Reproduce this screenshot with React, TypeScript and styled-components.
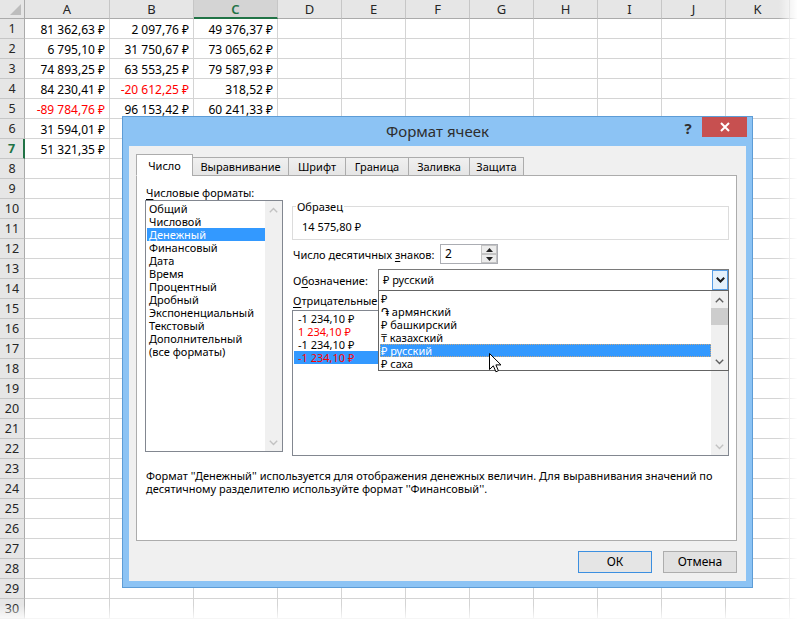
import React from 'react'
import styled, { createGlobalStyle, css } from 'styled-components'

const uiFont = `'Noto Sans', 'DejaVu Sans', sans-serif`

const GlobalStyle = createGlobalStyle`
  html, body { margin: 0; padding: 0; background: #ffffff; }
  body { font-family: ${uiFont}; overflow: hidden; }
`

const Page = styled.div`
  position: relative;
  width: 801px;
  height: 625px;
  overflow: hidden;
  background: #fff;
`

/* ---------- spreadsheet ---------- */

const Sheet = styled.div`
  display: grid;
  grid-template-columns: 25px 85px 84px 84px repeat(8, 64px) 1fr;
  grid-template-rows: 19px;
  grid-auto-rows: 20px;
  font-family: ${uiFont};
`

const HeadBase = css`
  box-sizing: border-box;
  background: #e6e6e6;
  color: #262626;
  font-size: 13px;
  display: flex;
  align-items: center;
  justify-content: center;
`

const Corner = styled.div`
  ${HeadBase}
  position: relative;
  border-right: 1px solid #ababab;
  border-bottom: 1px solid #ababab;

  &::after {
    content: '';
    position: absolute;
    right: 3px;
    bottom: 3px;
    border-style: solid;
    border-width: 0 0 11px 11px;
    border-color: transparent transparent #bdbdbd transparent;
  }
`

const ColHead = styled.div<{ $active?: boolean }>`
  ${HeadBase}
  border-right: 1px solid #c6c6c6;
  border-bottom: 1px solid #ababab;
  ${({ $active }) =>
    $active &&
    css`
      background: #d4d4d4;
      color: #217346;
      font-weight: 600;
      border-bottom: 2px solid #217346;
    `}
`

const RowHead = styled.div<{ $active?: boolean }>`
  ${HeadBase}
  font-size: 12.5px;
  border-right: 1px solid #ababab;
  border-bottom: 1px solid #c6c6c6;
  ${({ $active }) =>
    $active &&
    css`
      color: #217346;
      font-weight: 700;
      border-right: 2px solid #217346;
    `}
`

const Cell = styled.div<{ $red?: boolean }>`
  box-sizing: border-box;
  border-right: 1px solid #d4d4d4;
  border-bottom: 1px solid #d4d4d4;
  font-size: 12px;
  line-height: 21px;
  padding-right: 4px;
  text-align: right;
  white-space: nowrap;
  color: ${({ $red }) => ($red ? '#ff0000' : '#000')};
`

const FadeRight = styled.div`
  position: absolute;
  top: 0;
  right: 0;
  width: 22px;
  height: 100%;
  background: linear-gradient(to right, rgba(255, 255, 255, 0), #fff 85%);
  pointer-events: none;
`

const FadeBottom = styled.div`
  position: absolute;
  left: 0;
  bottom: 0;
  width: 100%;
  height: 20px;
  background: linear-gradient(to bottom, rgba(255, 255, 255, 0), #fff 85%);
  pointer-events: none;
`

/* ---------- dialog window ---------- */

const Window = styled.div`
  position: absolute;
  left: 122px;
  top: 116px;
  width: 631px;
  height: 472px;
  box-sizing: border-box;
  border: 1px solid #5d9cd6;
  background: #8cc3f4;
  display: flex;
  flex-direction: column;
  font-family: ${uiFont};
  font-size: 11px;
  color: #000;
`

const TitleBar = styled.div`
  height: 29px;
  flex: none;
  display: grid;
  grid-template-columns: 1fr auto 1fr;
  align-items: start;
`

const Title = styled.div`
  grid-column: 2;
  font-size: 15px;
  line-height: 29px;
  color: #2e2e2e;
`

const Controls = styled.div`
  grid-column: 3;
  justify-self: end;
  display: flex;
  margin-right: 5px;
`

const HelpButton = styled.div`
  width: 28px;
  height: 22px;
  line-height: 22px;
  text-align: center;
  font-size: 15px;
  font-weight: 700;
  color: #303030;
`

const CloseButton = styled.div`
  width: 45px;
  height: 20px;
  background: #c75050;
  display: flex;
  align-items: center;
  justify-content: center;
`

const Client = styled.div`
  flex: 1;
  margin: 0 6px 6px;
  background: #f0f0f0;
  padding: 8px 9px 0 7px;
  display: flex;
  flex-direction: column;
`

const Tabs = styled.div`
  display: flex;
  align-items: flex-end;
  height: 22px;
  margin-bottom: -1px;
  position: relative;
  z-index: 1;
`

const Tab = styled.div<{ $active?: boolean; $w: number }>`
  width: ${({ $w }) => $w}px;
  height: ${({ $active }) => ($active ? 22 : 19)}px;
  box-sizing: border-box;
  margin-left: -1px;
  border: 1px solid #acacac;
  border-bottom-color: ${({ $active }) => ($active ? '#fff' : '#acacac')};
  background: ${({ $active }) => ($active ? '#fff' : 'linear-gradient(#f0f0f0, #e5e5e5)')};
  text-align: center;
  line-height: ${({ $active }) => ($active ? 22 : 17)}px;
  white-space: nowrap;

  &:first-child {
    margin-left: 0;
  }
`

const Panel = styled.div`
  height: 366px;
  flex: none;
  box-sizing: border-box;
  border: 1px solid #acacac;
  background: #fff;
  padding: 9px 7px 0 8px;
`

const Formats = styled.div`
  display: grid;
  grid-template-columns: 138px 1fr;
  column-gap: 9px;
  align-items: start;
`

const Column = styled.div`
  display: flex;
  flex-direction: column;
`

const Label = styled.div`
  line-height: 15px;
  height: 15px;
  padding-left: 1px;
  white-space: nowrap;
`

const Key = styled.span`
  text-decoration: underline;
  text-underline-offset: 2px;
`

const ListBox = styled.div<{ $h: number }>`
  height: ${({ $h }) => $h}px;
  box-sizing: border-box;
  border: 1px solid #828790;
  background: #fff;
  display: flex;
`

const ListItems = styled.div`
  flex: 1;
  padding: 1px 0 0 1px;
  overflow: hidden;
`

const ListItem = styled.div<{ $selected?: boolean; $red?: boolean; $pad?: number }>`
  height: 13px;
  line-height: 13px;
  padding-left: ${({ $pad }) => $pad ?? 2}px;
  white-space: nowrap;
  color: ${({ $red, $selected }) => ($red ? '#ff0000' : $selected ? '#fff' : '#000')};
  background: ${({ $selected }) => ($selected ? '#3399ff' : 'transparent')};
`

const ScrollTrack = styled.div`
  width: 17px;
  flex: none;
  background: #f0f0f0;
  display: flex;
  flex-direction: column;
`

const ScrollArrow = styled.div`
  height: 17px;
  flex: none;
  display: flex;
  align-items: center;
  justify-content: center;
`

const ScrollThumb = styled.div`
  height: 17px;
  flex: none;
  background: #cdcdcd;
`

const ScrollRest = styled.div`
  flex: 1;
`

const Group = styled.fieldset`
  margin: 15px 0 0;
  padding: 0 0 6px 9px;
  min-width: 0;
  border: 1px solid #dcdcdc;
`

const Legend = styled.legend`
  margin-left: -6px;
  padding: 0 1px;
  line-height: 13px;
`

const Sample = styled.div`
  margin-top: 7px;
  line-height: 13px;
`

const FieldRow = styled.div<{ $mt: number }>`
  display: flex;
  align-items: center;
  margin-top: ${({ $mt }) => $mt}px;
  line-height: 15px;
`

const FieldLabel = styled.div<{ $w: number }>`
  width: ${({ $w }) => $w}px;
  flex: none;
  white-space: nowrap;
  padding-left: 1px;
  box-sizing: border-box;
`

const SpinBox = styled.div`
  width: 58px;
  height: 20px;
  box-sizing: border-box;
  border: 1px solid #abadb3;
  background: #fff;
  display: flex;
`

const SpinValue = styled.div`
  flex: 1;
  padding-left: 4px;
  line-height: 18px;
  font-size: 12px;
`

const SpinButtons = styled.div`
  width: 16px;
  display: flex;
  flex-direction: column;
`

const SpinButton = styled.div`
  flex: 1;
  box-sizing: border-box;
  border: 1px solid #c4c4c4;
  background: #ececec;
  display: flex;
  align-items: center;
  justify-content: center;
`

const Combo = styled.div`
  flex: 1;
  height: 22px;
  box-sizing: border-box;
  border: 1px solid #7a7a7a;
  background: #fff;
  display: flex;
  position: relative;
`

const ComboValue = styled.div`
  flex: 1;
  padding-left: 4px;
  line-height: 20px;
`

const ComboButton = styled.div`
  width: 16px;
  box-sizing: border-box;
  border: 1px solid #569de5;
  background: #e5f1fb;
  display: flex;
  align-items: center;
  justify-content: center;
`

const Dropdown = styled.div`
  position: absolute;
  left: -1px;
  right: -1px;
  top: 20px;
  height: 81px;
  box-sizing: border-box;
  border: 1px solid #646464;
  background: #fff;
  display: flex;
  z-index: 5;
`

const DropItem = styled.div<{ $selected?: boolean }>`
  height: 13px;
  line-height: 13px;
  padding-left: 1px;
  white-space: nowrap;
  box-sizing: border-box;
  color: ${({ $selected }) => ($selected ? '#fff' : '#000')};
  background: ${({ $selected }) => ($selected ? '#3399ff' : 'transparent')};
  outline: ${({ $selected }) => ($selected ? '1px dotted #c9a67e' : 'none')};
  outline-offset: -1px;
`

const SubLabel = styled(Label)`
  margin-top: 2px;
  margin-bottom: 2px;
`

const Description = styled.div`
  margin-top: 13px;
  line-height: 13px;
  padding-left: 1px;
  white-space: nowrap;
`

const ButtonRow = styled.div`
  display: flex;
  justify-content: flex-end;
  gap: 11px;
  margin-top: 10px;
`

const DialogButton = styled.div<{ $default?: boolean }>`
  width: 74px;
  height: 22px;
  box-sizing: border-box;
  border: 1px solid ${({ $default }) => ($default ? '#3c8fe0' : '#adadad')};
  background: ${({ $default }) => ($default ? '#e5e5e5' : '#e1e1e1')};
  text-align: center;
  line-height: 20px;
  font-size: 12px;
`

const Cursor = styled.svg`
  position: absolute;
  left: 489px;
  top: 353px;
  z-index: 10;
`

/* ---------- bits ---------- */

const Chevron: React.FC<{ dir: 'up' | 'down'; color: string; weight?: number }> = ({ dir, color, weight = 1.4 }) => (
  <svg width="9" height="6" viewBox="0 0 9 6">
    <polyline
      points={dir === 'up' ? '0.8,5.2 4.5,1.5 8.2,5.2' : '0.8,0.8 4.5,4.5 8.2,0.8'}
      fill="none"
      stroke={color}
      strokeWidth={weight}
    />
  </svg>
)

const Triangle: React.FC<{ dir: 'up' | 'down' }> = ({ dir }) => (
  <svg width="7" height="4" viewBox="0 0 7 4">
    <polygon points={dir === 'up' ? '0,4 3.5,0 7,4' : '0,0 7,0 3.5,4'} fill="#222" />
  </svg>
)

const Scrollbar: React.FC<{ active?: boolean }> = ({ active }) => {
  const c = active ? '#606060' : '#c2c2c2'
  return (
    <ScrollTrack>
      <ScrollArrow>
        <Chevron dir="up" color={c} />
      </ScrollArrow>
      {active && <ScrollThumb />}
      <ScrollRest />
      <ScrollArrow>
        <Chevron dir="down" color={c} />
      </ScrollArrow>
    </ScrollTrack>
  )
}

/* ---------- data ---------- */

type Value = { v: string; red?: boolean }

const letters = ['A', 'B', 'C', 'D', 'E', 'F', 'G', 'H', 'I', 'J', 'K']

const values: Record<number, (Value | null)[]> = {
  1: [{ v: '81 362,63 ₽' }, { v: '2 097,76 ₽' }, { v: '49 376,37 ₽' }],
  2: [{ v: '6 795,10 ₽' }, { v: '31 750,67 ₽' }, { v: '73 065,62 ₽' }],
  3: [{ v: '74 893,25 ₽' }, { v: '63 553,25 ₽' }, { v: '79 587,93 ₽' }],
  4: [{ v: '84 230,41 ₽' }, { v: '-20 612,25 ₽', red: true }, { v: '318,52 ₽' }],
  5: [{ v: '-89 784,76 ₽', red: true }, { v: '96 153,42 ₽' }, { v: '60 241,33 ₽' }],
  6: [{ v: '31 594,01 ₽' }, null, null],
  7: [{ v: '51 321,35 ₽' }, null, null],
}

const formats = [
  'Общий',
  'Числовой',
  'Денежный',
  'Финансовый',
  'Дата',
  'Время',
  'Процентный',
  'Дробный',
  'Экспоненциальный',
  'Текстовый',
  'Дополнительный',
  '(все форматы)',
]

const currencies = ['₽', '֏ армянский', '₽ башкирский', '₸ казахский', '₽ русский', '₽ саха']

const negatives: Value[] = [
  { v: '-1 234,10 ₽' },
  { v: '1 234,10 ₽', red: true },
  { v: '-1 234,10 ₽' },
  { v: '-1 234,10 ₽', red: true },
]

const tabs = [
  { name: 'Число', w: 57 },
  { name: 'Выравнивание', w: 97 },
  { name: 'Шрифт', w: 58 },
  { name: 'Граница', w: 64 },
  { name: 'Заливка', w: 62 },
  { name: 'Защита', w: 55 },
]

const rowNumbers = Array.from({ length: 30 }, (_, i) => i + 1)

export default function App() {
  return (
    <Page>
      <GlobalStyle />
      <Sheet>
        <Corner />
        {letters.map((l) => (
          <ColHead key={l} $active={l === 'C'}>
            {l}
          </ColHead>
        ))}
        <ColHead />
        {rowNumbers.map((r) => (
          <React.Fragment key={r}>
            <RowHead $active={r === 7}>{r}</RowHead>
            {letters.map((l, ci) => {
              const val = values[r]?.[ci]
              return (
                <Cell key={l} $red={val?.red}>
                  {val?.v}
                </Cell>
              )
            })}
            <Cell />
          </React.Fragment>
        ))}
      </Sheet>
      <FadeRight />
      <FadeBottom />

      <Window>
        <TitleBar>
          <Title>Формат ячеек</Title>
          <Controls>
            <HelpButton>?</HelpButton>
            <CloseButton>
              <svg width="10" height="10" viewBox="0 0 10 10">
                <path d="M1 1 L9 9 M9 1 L1 9" stroke="#fff" strokeWidth="2" />
              </svg>
            </CloseButton>
          </Controls>
        </TitleBar>

        <Client>
          <Tabs>
            {tabs.map((t, i) => (
              <Tab key={t.name} $w={t.w} $active={i === 0}>
                {t.name}
              </Tab>
            ))}
          </Tabs>

          <Panel>
            <Formats>
              <Column>
                <Label>
                  <Key>Ч</Key>исловые форматы:
                </Label>
                <ListBox $h={252}>
                  <ListItems>
                    {formats.map((f) => (
                      <ListItem key={f} $selected={f === 'Денежный'}>
                        {f}
                      </ListItem>
                    ))}
                  </ListItems>
                  <Scrollbar />
                </ListBox>
              </Column>

              <Column>
                <Group>
                  <Legend>Образец</Legend>
                  <Sample>14 575,80 ₽</Sample>
                </Group>

                <FieldRow $mt={4}>
                  <FieldLabel $w={148}>
                    Число десятичных <Key>з</Key>наков:
                  </FieldLabel>
                  <SpinBox>
                    <SpinValue>2</SpinValue>
                    <SpinButtons>
                      <SpinButton>
                        <Triangle dir="up" />
                      </SpinButton>
                      <SpinButton>
                        <Triangle dir="down" />
                      </SpinButton>
                    </SpinButtons>
                  </SpinBox>
                </FieldRow>

                <FieldRow $mt={5}>
                  <FieldLabel $w={86}>
                    О<Key>б</Key>означение:
                  </FieldLabel>
                  <Combo>
                    <ComboValue>₽ русский</ComboValue>
                    <ComboButton>
                      <Chevron dir="down" color="#1a1a1a" weight={2} />
                    </ComboButton>
                    <Dropdown>
                      <ListItems>
                        {currencies.map((c) => (
                          <DropItem key={c} $selected={c === '₽ русский'}>
                            {c}
                          </DropItem>
                        ))}
                      </ListItems>
                      <Scrollbar active />
                    </Dropdown>
                  </Combo>
                </FieldRow>

                <SubLabel>
                  <Key>О</Key>трицательные числа:
                </SubLabel>
                <ListBox $h={146}>
                  <ListItems>
                    {negatives.map((n, i) => (
                      <ListItem key={i} $red={n.red} $selected={i === 3} $pad={4}>
                        {n.v}
                      </ListItem>
                    ))}
                  </ListItems>
                  <Scrollbar />
                </ListBox>
              </Column>
            </Formats>

            <Description>
              Формат ''Денежный'' используется для отображения денежных величин. Для выравнивания значений по
              <br />
              десятичному разделителю используйте формат ''Финансовый''.
            </Description>
          </Panel>

          <ButtonRow>
            <DialogButton $default>ОК</DialogButton>
            <DialogButton>Отмена</DialogButton>
          </ButtonRow>
        </Client>
      </Window>

      <Cursor width="13" height="20" viewBox="0 0 13 20">
        <path
          d="M0.5 0.5 L0.5 16.5 L4.3 12.8 L6.9 18.8 L9.4 17.7 L6.9 11.9 L12 11.9 Z"
          fill="#fff"
          stroke="#000"
          strokeWidth="1"
          strokeLinejoin="miter"
        />
      </Cursor>
    </Page>
  )
}
